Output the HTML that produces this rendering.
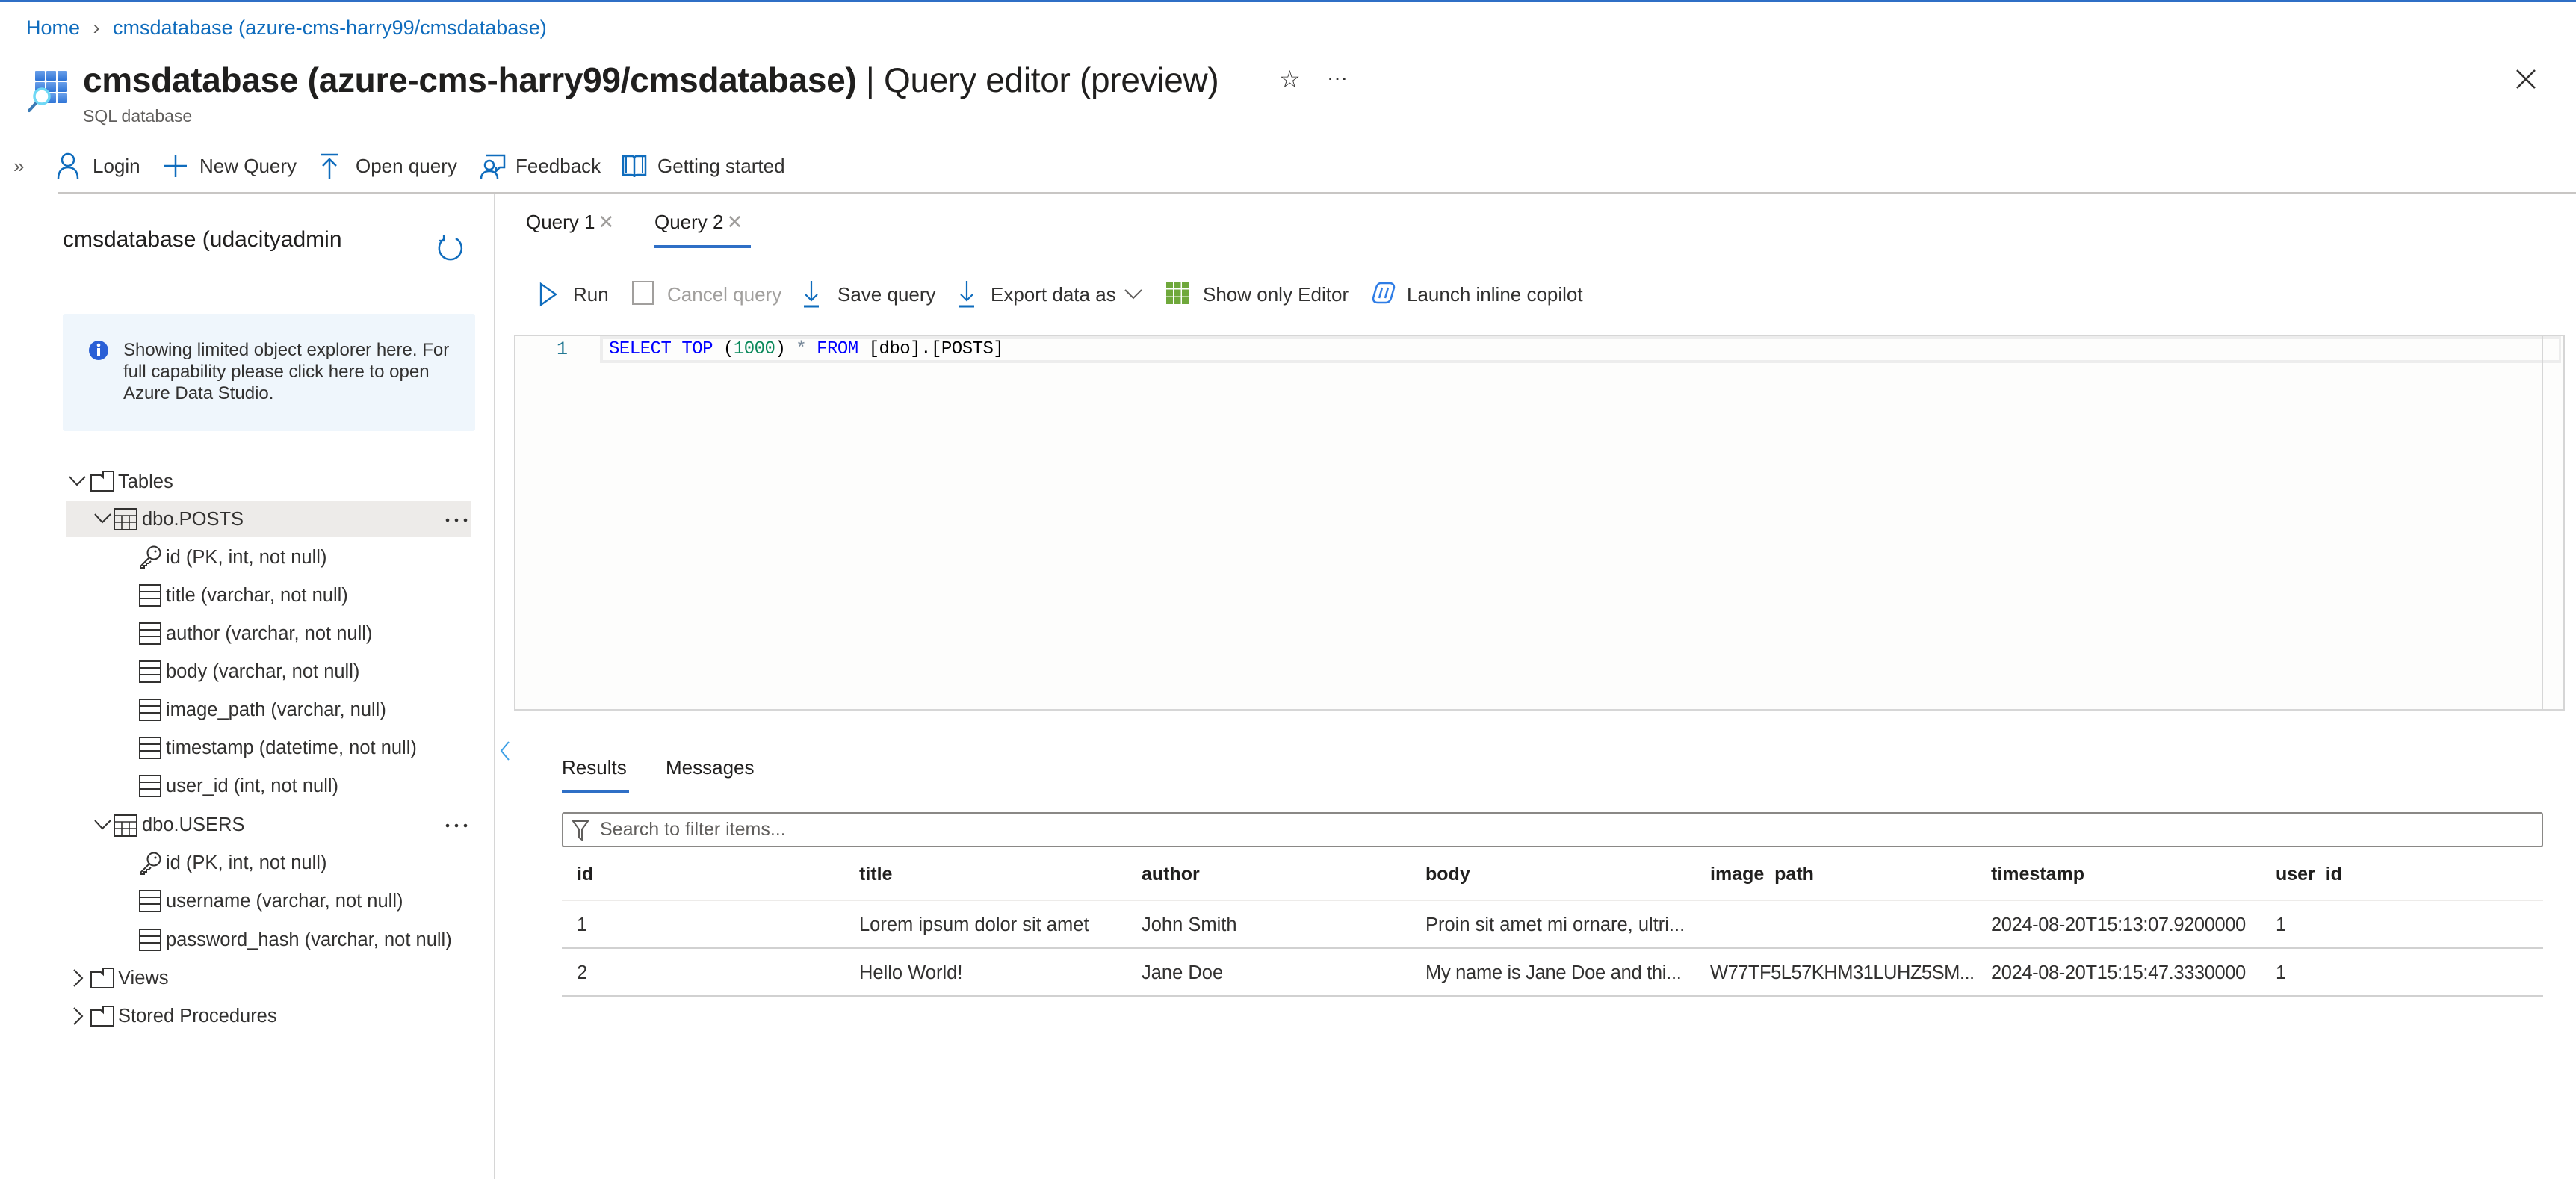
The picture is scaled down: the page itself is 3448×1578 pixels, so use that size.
<!DOCTYPE html>
<html><head><meta charset="utf-8"><style>
*{margin:0;padding:0;box-sizing:border-box}
body{width:3448px;height:1578px;background:#fff;font-family:"Liberation Sans",sans-serif;color:#323130;position:relative;overflow:hidden}
.a{position:absolute;white-space:nowrap}
.t{font-size:26px;line-height:36px}
svg{position:absolute;overflow:visible}
.col{font-size:25.5px;line-height:36px}
.hd{font-size:25px;line-height:36px;font-weight:bold;color:#201f1e}
</style></head><body>
<div class="a" style="left:0;top:0;width:3448px;height:3px;background:#2f6fc6"></div>
<div class="a t" style="left:35px;top:19px;color:#0f6cbd;font-size:27px">Home <span style="color:#605e5c;margin:0 10px">&#8250;</span> cmsdatabase (azure-cms-harry99/cmsdatabase)</div>

<svg style="left:36px;top:94px" width="56" height="58" viewBox="0 0 56 58">
<defs><linearGradient id="g" x1="0" y1="0" x2="0" y2="1"><stop offset="0" stop-color="#6ba0ea"/><stop offset="1" stop-color="#2f74d6"/></linearGradient></defs>
<g fill="url(#g)"><rect x="11" y="1" width="13" height="13" rx="1"/><rect x="26" y="1" width="13" height="13" rx="1"/><rect x="41" y="1" width="13" height="13" rx="1"/><rect x="11" y="16" width="13" height="13" rx="1"/><rect x="26" y="16" width="13" height="13" rx="1"/><rect x="41" y="16" width="13" height="13" rx="1"/><rect x="26" y="31" width="13" height="13" rx="1"/><rect x="41" y="31" width="13" height="13" rx="1"/></g>
<line x1="13" y1="43" x2="3" y2="54" stroke="#3a7ab5" stroke-width="4" stroke-linecap="round"/>
<circle cx="20" cy="35" r="10" fill="#fff" stroke="#6fd8f5" stroke-width="3.5"/>
</svg>
<div class="a" style="left:111px;top:78px;font-size:46px;line-height:58px;color:#201f1e;letter-spacing:-0.3px"><b style="font-weight:bold">cmsdatabase (azure-cms-harry99/cmsdatabase)</b> | Query editor (preview)</div>
<div class="a" style="left:1712px;top:86px;font-size:32px;line-height:40px;color:#323130">&#9734;</div>
<div class="a" style="left:1776px;top:84px;font-size:28px;line-height:40px;color:#323130">&middot;&middot;&middot;</div>
<svg style="left:3368px;top:93px" width="26" height="26"><path d="M1 1L25 25M25 1L1 25" stroke="#323130" stroke-width="2.5"/></svg>
<div class="a" style="left:111px;top:140px;font-size:23px;line-height:30px;color:#605e5c">SQL database</div>

<!-- toolbar -->
<div class="a t" style="left:18px;top:204px;color:#605e5c">&#187;</div>
<svg style="left:76px;top:204px" width="30" height="36"><circle cx="15" cy="10" r="8" fill="none" stroke="#0f6cbd" stroke-width="2.5"/><path d="M2 35C2 24 8 20 15 20S28 24 28 35" fill="none" stroke="#0f6cbd" stroke-width="2.5"/></svg>
<div class="a t" style="left:124px;top:204px">Login</div>
<svg style="left:220px;top:207px" width="30" height="30"><path d="M15 0V30M0 15H30" stroke="#0f6cbd" stroke-width="2.5"/></svg>
<div class="a t" style="left:267px;top:204px">New Query</div>
<svg style="left:428px;top:205px" width="26" height="34"><path d="M1 2H25M13 8V34M4 17L13 8L22 17" fill="none" stroke="#0f6cbd" stroke-width="2.5"/></svg>
<div class="a t" style="left:476px;top:204px">Open query</div>
<svg style="left:643px;top:205px" width="34" height="34"><path d="M8 3H32V19H26L21 24V19" fill="none" stroke="#0f6cbd" stroke-width="2.5"/><circle cx="12" cy="16" r="6" fill="none" stroke="#0f6cbd" stroke-width="2.5"/><path d="M1 34C1 27 6 24 12 24S23 27 23 34" fill="none" stroke="#0f6cbd" stroke-width="2.5"/></svg>
<div class="a t" style="left:690px;top:204px">Feedback</div>
<svg style="left:832px;top:205px" width="34" height="34"><path d="M2 4H14Q17 4 17 8V32Q17 29 13 29H2ZM32 4H20Q17 4 17 8V32Q17 29 21 29H32Z" fill="none" stroke="#0f6cbd" stroke-width="2.5"/><path d="M6 4V26M28 4V26" stroke="#0f6cbd" stroke-width="2"/></svg>
<div class="a t" style="left:880px;top:204px">Getting started</div>
<div class="a" style="left:77px;top:257px;width:3371px;height:2px;background:#c8c6c4"></div>
<div class="a" style="left:661px;top:259px;width:2px;height:1319px;background:#d6d6d6"></div>

<!-- left panel -->
<div class="a" style="left:84px;top:301px;font-size:30px;line-height:40px;color:#201f1e">cmsdatabase (udacityadmin</div>
<svg style="left:585px;top:314px" width="36" height="36"><path d="M9 6A15 15 0 1 0 25 5" fill="none" stroke="#0f6cbd" stroke-width="2.5"/><path d="M9 1V8H3" fill="none" stroke="#0f6cbd" stroke-width="2.2"/></svg>
<div class="a" style="left:84px;top:420px;width:552px;height:157px;background:#eff6fc;border-radius:3px"></div>
<svg style="left:117px;top:454px" width="30" height="30"><circle cx="15" cy="15" r="13" fill="#2a5fd6"/><rect x="13" y="12" width="4" height="11" fill="#fff"/><circle cx="15" cy="8" r="2.3" fill="#fff"/></svg>
<div class="a" style="left:165px;top:454px;font-size:24px;line-height:29px;color:#323130;white-space:normal;width:460px">Showing limited object explorer here. For full capability please click here to open Azure Data Studio.</div>

<svg style="left:92px;top:636px" width="24" height="16"><path d="M1 2L11 13L22 2" fill="none" stroke="#323130" stroke-width="2"/></svg>
<svg style="left:121px;top:630px" width="32" height="28"><path d="M1 6H14L17 9V1H31V27H1Z" fill="none" stroke="#323130" stroke-width="2"/></svg>
<div class="a col" style="left:158px;top:627px">Tables</div>
<div class="a" style="left:88px;top:671px;width:543px;height:48px;background:#edebe9"></div>
<svg style="left:126px;top:686px" width="24" height="16"><path d="M1 2L11 13L22 2" fill="none" stroke="#323130" stroke-width="2"/></svg>
<svg style="left:152px;top:680px" width="32" height="30"><rect x="1" y="1" width="30" height="28" fill="none" stroke="#323130" stroke-width="2"/><path d="M1 10H31M1 19H31M11 10V29M21 10V29" stroke="#323130" stroke-width="1.6"/></svg>
<div class="a col" style="left:190px;top:677px">dbo.POSTS</div>
<svg style="left:596px;top:693px" width="30" height="6"><circle cx="3" cy="3" r="2.3" fill="#323130"/><circle cx="15" cy="3" r="2.3" fill="#323130"/><circle cx="27" cy="3" r="2.3" fill="#323130"/></svg>

<svg style="left:186px;top:730px" width="30" height="30"><circle cx="20" cy="10" r="8.5" fill="none" stroke="#323130" stroke-width="2"/><circle cx="22" cy="8" r="1.5" fill="#323130"/><path d="M14 16L2 28V30H7V27H10V24H13L16 21" fill="none" stroke="#323130" stroke-width="2"/></svg>
<div class="a col" style="left:222px;top:728px">id (PK, int, not null)</div>

<svg style="left:186px;top:782px" width="30" height="30"><rect x="1" y="1" width="28" height="28" fill="none" stroke="#323130" stroke-width="2"/><path d="M1 10H29M1 19H29" stroke="#323130" stroke-width="2"/></svg>
<div class="a col" style="left:222px;top:779px">title (varchar, not null)</div>
<svg style="left:186px;top:833px" width="30" height="30"><rect x="1" y="1" width="28" height="28" fill="none" stroke="#323130" stroke-width="2"/><path d="M1 10H29M1 19H29" stroke="#323130" stroke-width="2"/></svg>
<div class="a col" style="left:222px;top:830px">author (varchar, not null)</div>
<svg style="left:186px;top:884px" width="30" height="30"><rect x="1" y="1" width="28" height="28" fill="none" stroke="#323130" stroke-width="2"/><path d="M1 10H29M1 19H29" stroke="#323130" stroke-width="2"/></svg>
<div class="a col" style="left:222px;top:881px">body (varchar, not null)</div>
<svg style="left:186px;top:935px" width="30" height="30"><rect x="1" y="1" width="28" height="28" fill="none" stroke="#323130" stroke-width="2"/><path d="M1 10H29M1 19H29" stroke="#323130" stroke-width="2"/></svg>
<div class="a col" style="left:222px;top:932px">image_path (varchar, null)</div>
<svg style="left:186px;top:986px" width="30" height="30"><rect x="1" y="1" width="28" height="28" fill="none" stroke="#323130" stroke-width="2"/><path d="M1 10H29M1 19H29" stroke="#323130" stroke-width="2"/></svg>
<div class="a col" style="left:222px;top:983px">timestamp (datetime, not null)</div>
<svg style="left:186px;top:1037px" width="30" height="30"><rect x="1" y="1" width="28" height="28" fill="none" stroke="#323130" stroke-width="2"/><path d="M1 10H29M1 19H29" stroke="#323130" stroke-width="2"/></svg>
<div class="a col" style="left:222px;top:1034px">user_id (int, not null)</div>

<svg style="left:126px;top:1096px" width="24" height="16"><path d="M1 2L11 13L22 2" fill="none" stroke="#323130" stroke-width="2"/></svg>
<svg style="left:152px;top:1090px" width="32" height="30"><rect x="1" y="1" width="30" height="28" fill="none" stroke="#323130" stroke-width="2"/><path d="M1 10H31M1 19H31M11 10V29M21 10V29" stroke="#323130" stroke-width="1.6"/></svg>
<div class="a col" style="left:190px;top:1086px">dbo.USERS</div>
<svg style="left:596px;top:1102px" width="30" height="6"><circle cx="3" cy="3" r="2.3" fill="#323130"/><circle cx="15" cy="3" r="2.3" fill="#323130"/><circle cx="27" cy="3" r="2.3" fill="#323130"/></svg>
<svg style="left:186px;top:1140px" width="30" height="30"><circle cx="20" cy="10" r="8.5" fill="none" stroke="#323130" stroke-width="2"/><circle cx="22" cy="8" r="1.5" fill="#323130"/><path d="M14 16L2 28V30H7V27H10V24H13L16 21" fill="none" stroke="#323130" stroke-width="2"/></svg>
<div class="a col" style="left:222px;top:1137px">id (PK, int, not null)</div>
<svg style="left:186px;top:1191px" width="30" height="30"><rect x="1" y="1" width="28" height="28" fill="none" stroke="#323130" stroke-width="2"/><path d="M1 10H29M1 19H29" stroke="#323130" stroke-width="2"/></svg>
<div class="a col" style="left:222px;top:1188px">username (varchar, not null)</div>
<svg style="left:186px;top:1243px" width="30" height="30"><rect x="1" y="1" width="28" height="28" fill="none" stroke="#323130" stroke-width="2"/><path d="M1 10H29M1 19H29" stroke="#323130" stroke-width="2"/></svg>
<div class="a col" style="left:222px;top:1240px">password_hash (varchar, not null)</div>

<svg style="left:97px;top:1297px" width="16" height="24"><path d="M2 1L13 12L2 23" fill="none" stroke="#323130" stroke-width="2"/></svg>
<svg style="left:121px;top:1295px" width="32" height="28"><path d="M1 6H14L17 9V1H31V27H1Z" fill="none" stroke="#323130" stroke-width="2"/></svg>
<div class="a col" style="left:158px;top:1291px">Views</div>
<svg style="left:97px;top:1348px" width="16" height="24"><path d="M2 1L13 12L2 23" fill="none" stroke="#323130" stroke-width="2"/></svg>
<svg style="left:121px;top:1346px" width="32" height="28"><path d="M1 6H14L17 9V1H31V27H1Z" fill="none" stroke="#323130" stroke-width="2"/></svg>
<div class="a col" style="left:158px;top:1342px">Stored Procedures</div>

<!-- tabs -->
<div class="a t" style="left:704px;top:279px;color:#201f1e">Query 1<span style="color:#a19f9d;margin-left:4px">&#10005;</span></div>
<div class="a t" style="left:876px;top:279px;color:#201f1e">Query 2<span style="color:#a19f9d;margin-left:4px">&#10005;</span></div>
<div class="a" style="left:876px;top:328px;width:129px;height:4px;background:#2f6fc6"></div>

<!-- query toolbar -->
<svg style="left:722px;top:378px" width="24" height="32"><path d="M2 2L22 16L2 30Z" fill="none" stroke="#0f6cbd" stroke-width="2.3"/></svg>
<div class="a t" style="left:767px;top:376px">Run</div>
<div class="a" style="left:846px;top:376px;width:29px;height:32px;border:2.5px solid #a19f9d"></div>
<div class="a t" style="left:893px;top:376px;color:#a19f9d">Cancel query</div>
<svg style="left:1075px;top:376px" width="22" height="36"><path d="M11 0V26M3 18L11 26L19 18" fill="none" stroke="#0f6cbd" stroke-width="2.2"/><path d="M1 34H21" stroke="#0f6cbd" stroke-width="3"/></svg>
<div class="a t" style="left:1121px;top:376px">Save query</div>
<svg style="left:1283px;top:376px" width="22" height="36"><path d="M11 0V26M3 18L11 26L19 18" fill="none" stroke="#0f6cbd" stroke-width="2.2"/><path d="M1 34H21" stroke="#0f6cbd" stroke-width="3"/></svg>
<div class="a t" style="left:1326px;top:376px">Export data as</div>
<svg style="left:1505px;top:387px" width="24" height="14"><path d="M1 1L12 12L23 1" fill="none" stroke="#605e5c" stroke-width="2"/></svg>
<svg style="left:1561px;top:377px" width="30" height="30"><g fill="#6fa83b"><rect x="0" y="0" width="9" height="9"/><rect x="10.5" y="0" width="9" height="9"/><rect x="21" y="0" width="9" height="9"/><rect x="0" y="10.5" width="9" height="9"/><rect x="10.5" y="10.5" width="9" height="9"/><rect x="21" y="10.5" width="9" height="9"/><rect x="0" y="21" width="9" height="9"/><rect x="10.5" y="21" width="9" height="9"/><rect x="21" y="21" width="9" height="9"/></g></svg>
<div class="a t" style="left:1610px;top:376px">Show only Editor</div>
<svg style="left:1836px;top:377px" width="32" height="30"><path d="M12 2H24Q30 2 30 8L26 22Q24 28 19 28H8Q2 28 2 22L6 8Q8 2 12 2Z" fill="none" stroke="#2f7de6" stroke-width="2.5"/><path d="M14 8L10 22M22 8L18 22" stroke="#2f7de6" stroke-width="2.5"/></svg>
<div class="a t" style="left:1883px;top:376px">Launch inline copilot</div>

<!-- editor -->
<div class="a" style="left:688px;top:448px;width:2745px;height:503px;border:2px solid #d6d6d6;background:#fdfdfc"></div>
<div class="a" style="left:803px;top:450px;width:2625px;height:36px;border:4px solid #ededed;border-right-width:3px;background:#fdfdfc"></div>
<div class="a" style="left:3403px;top:450px;width:1px;height:499px;background:#d6d6d6"></div>
<div class="a" style="left:745px;top:450px;font-family:'Liberation Mono',monospace;font-size:25px;line-height:36px;color:#237893">1</div>
<div class="a" style="left:815px;top:450px;font-family:'Liberation Mono',monospace;font-size:24px;line-height:36px;color:#000;letter-spacing:-0.5px"><span style="color:#0000ff">SELECT TOP</span> (<span style="color:#09885a">1000</span>) <span style="color:#778899">*</span> <span style="color:#0000ff">FROM</span> [dbo].[POSTS]</div>

<svg style="left:669px;top:992px" width="14" height="26"><path d="M12 1L2 13L12 25" fill="none" stroke="#3ea0e6" stroke-width="2"/></svg>

<!-- results -->
<div class="a t" style="left:752px;top:1009px;color:#201f1e">Results</div>
<div class="a t" style="left:891px;top:1009px;color:#201f1e">Messages</div>
<div class="a" style="left:752px;top:1057px;width:90px;height:4px;background:#2f6fc6"></div>
<div class="a" style="left:752px;top:1087px;width:2652px;height:47px;border:2px solid #8a8886;border-radius:3px"></div>
<svg style="left:766px;top:1097px" width="22" height="28"><path d="M1 2H21L13 13V27L9 24V13Z" fill="none" stroke="#605e5c" stroke-width="2"/></svg>
<div class="a" style="left:803px;top:1092px;font-size:25px;line-height:36px;color:#605e5c">Search to filter items...</div>

<div class="a" style="left:752px;top:1204px;width:2652px;height:2px;background:#edebe9"></div>
<div class="a" style="left:752px;top:1268px;width:2652px;height:2px;background:#d1d1d1"></div>
<div class="a" style="left:752px;top:1332px;width:2652px;height:2px;background:#d1d1d1"></div>

<div class="a hd" style="top:1152px;left:772px">id</div>
<div class="a hd" style="top:1152px;left:1150px">title</div>
<div class="a hd" style="top:1152px;left:1528px">author</div>
<div class="a hd" style="top:1152px;left:1908px">body</div>
<div class="a hd" style="top:1152px;left:2289px">image_path</div>
<div class="a hd" style="top:1152px;left:2665px">timestamp</div>
<div class="a hd" style="top:1152px;left:3046px">user_id</div>

<div class="a col" style="top:1220px;left:772px">1</div>
<div class="a col" style="top:1220px;left:1150px">Lorem ipsum dolor sit amet</div>
<div class="a col" style="top:1220px;left:1528px">John Smith</div>
<div class="a col" style="top:1220px;left:1908px">Proin sit amet mi ornare, ultri...</div>
<div class="a col" style="top:1220px;left:2665px;letter-spacing:-0.4px">2024-08-20T15:13:07.9200000</div>
<div class="a col" style="top:1220px;left:3046px">1</div>

<div class="a col" style="top:1284px;left:772px">2</div>
<div class="a col" style="top:1284px;left:1150px">Hello World!</div>
<div class="a col" style="top:1284px;left:1528px">Jane Doe</div>
<div class="a col" style="top:1284px;left:1908px;letter-spacing:-0.3px">My name is Jane Doe and thi...</div>
<div class="a col" style="top:1284px;left:2289px;width:360px;overflow:hidden;letter-spacing:-0.5px">W77TF5L57KHM31LUHZ5SM...</div>
<div class="a col" style="top:1284px;left:2665px;letter-spacing:-0.4px">2024-08-20T15:15:47.3330000</div>
<div class="a col" style="top:1284px;left:3046px">1</div>
</body></html>
